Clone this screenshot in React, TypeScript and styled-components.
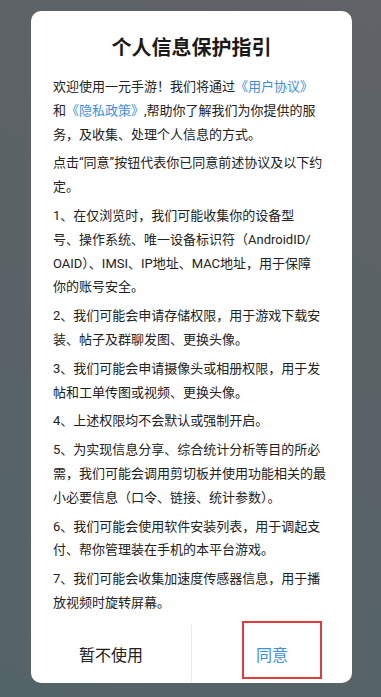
import React from 'react'
import styled, { createGlobalStyle } from 'styled-components'

const GlobalStyle = createGlobalStyle`
  html, body {
    margin: 0;
    padding: 0;
  }
  body {
    width: 381px;
    height: 697px;
    overflow: hidden;
    background: linear-gradient(20deg, #536468 0%, #5b6367 55%, #606367 100%);
    font-family: Roboto, "Noto Sans CJK SC", sans-serif;
  }
`;

type Piece = { text: string; link?: boolean };

// each paragraph is a list of lines, lines are lists of pieces
const paragraphs: Piece[][][] = [
    [
        [{ text: '欢迎使用一元手游！我们将通过' }, { text: '《用户协议》', link: true }],
        [{ text: '和' }, { text: '《隐私政策》', link: true }, { text: ',帮助你了解我们为你提供的服' }],
        [{ text: '务，及收集、处理个人信息的方式。' }],
    ],
    [
        [{ text: '点击“同意”按钮代表你已同意前述协议及以下约' }],
        [{ text: '定。' }],
    ],
    [
        [{ text: '1、在仅浏览时，我们可能收集你的设备型' }],
        [{ text: '号、操作系统、唯一设备标识符（AndroidID/' }],
        [{ text: 'OAID）、IMSI、IP地址、MAC地址，用于保障' }],
        [{ text: '你的账号安全。' }],
    ],
    [
        [{ text: '2、我们可能会申请存储权限，用于游戏下载安' }],
        [{ text: '装、帖子及群聊发图、更换头像。' }],
    ],
    [
        [{ text: '3、我们可能会申请摄像头或相册权限，用于发' }],
        [{ text: '帖和工单传图或视频、更换头像。' }],
    ],
    [
        [{ text: '4、上述权限均不会默认或强制开启。' }],
    ],
    [
        [{ text: '5、为实现信息分享、综合统计分析等目的所必' }],
        [{ text: '需，我们可能会调用剪切板并使用功能相关的最' }],
        [{ text: '小必要信息（口令、链接、统计参数）。' }],
    ],
    [
        [{ text: '6、我们可能会使用软件安装列表，用于调起支' }],
        [{ text: '付、帮你管理装在手机的本平台游戏。' }],
    ],
    [
        [{ text: '7、我们可能会收集加速度传感器信息，用于播' }],
        [{ text: '放视频时旋转屏幕。' }],
    ],
];

export default function App() {
    return (
        <>
            <GlobalStyle />
            <Dialog.Wrapper>
                <Dialog.Title>个人信息保护指引</Dialog.Title>
                <Dialog.Body>
                    {paragraphs.map((lines, i) => (
                        <Dialog.Paragraph key={i}>
                            {lines.map((line, j) => (
                                <Dialog.Line key={j}>
                                    {line.map((piece, k) =>
                                        piece.link ? (
                                            <Dialog.Link key={k}>{piece.text}</Dialog.Link>
                                        ) : (
                                            <span key={k}>{piece.text}</span>
                                        )
                                    )}
                                </Dialog.Line>
                            ))}
                        </Dialog.Paragraph>
                    ))}
                </Dialog.Body>
                <Dialog.Actions>
                    <Dialog.Button>暂不使用</Dialog.Button>
                    <Dialog.Button primary>同意</Dialog.Button>
                </Dialog.Actions>
                <Dialog.Highlight />
            </Dialog.Wrapper>
        </>
    )
}

const Dialog = {
    Wrapper: styled.div`
        position: relative;
        margin: 11px 0 0 31px;
        width: 321px;
        height: 672px;
        background: #ffffff;
        border-radius: 10px;
        display: flex;
        flex-direction: column;
        overflow: hidden;
    `,
    Title: styled.h1`
        margin: 0;
        padding-top: 23px;
        font-size: 20px;
        line-height: 28px;
        font-weight: bold;
        color: #1a1a1a;
        text-align: center;
    `,
    Body: styled.div`
        padding: 13px 22px 0 22px;
        display: flex;
        flex-direction: column;
        gap: 5px;
        flex: 1;
    `,
    Paragraph: styled.p`
        margin: 0;
        font-size: 13px;
        line-height: 23.8px;
        color: #222222;
    `,
    Line: styled.span`
        display: block;
        white-space: nowrap;
    `,
    Link: styled.span`
        color: #3d8ee2;
    `,
    Actions: styled.div`
        display: flex;
        height: 58px;
    `,
    Button: styled.button<{ primary?: boolean }>`
        flex: 1;
        border: none;
        background: transparent;
        padding: 0;
        font-family: inherit;
        font-size: 16px;
        color: ${p => (p.primary ? '#3b8fe4' : '#222222')};
        border-left: ${p => (p.primary ? '1px solid #ebebeb' : 'none')};
        cursor: pointer;
    `,
    // annotation box drawn over the agree button
    Highlight: styled.div`
        position: absolute;
        left: 211px;
        top: 610px;
        width: 76px;
        height: 54px;
        border: 2.5px solid #e23b3b;
        pointer-events: none;
    `,
}
